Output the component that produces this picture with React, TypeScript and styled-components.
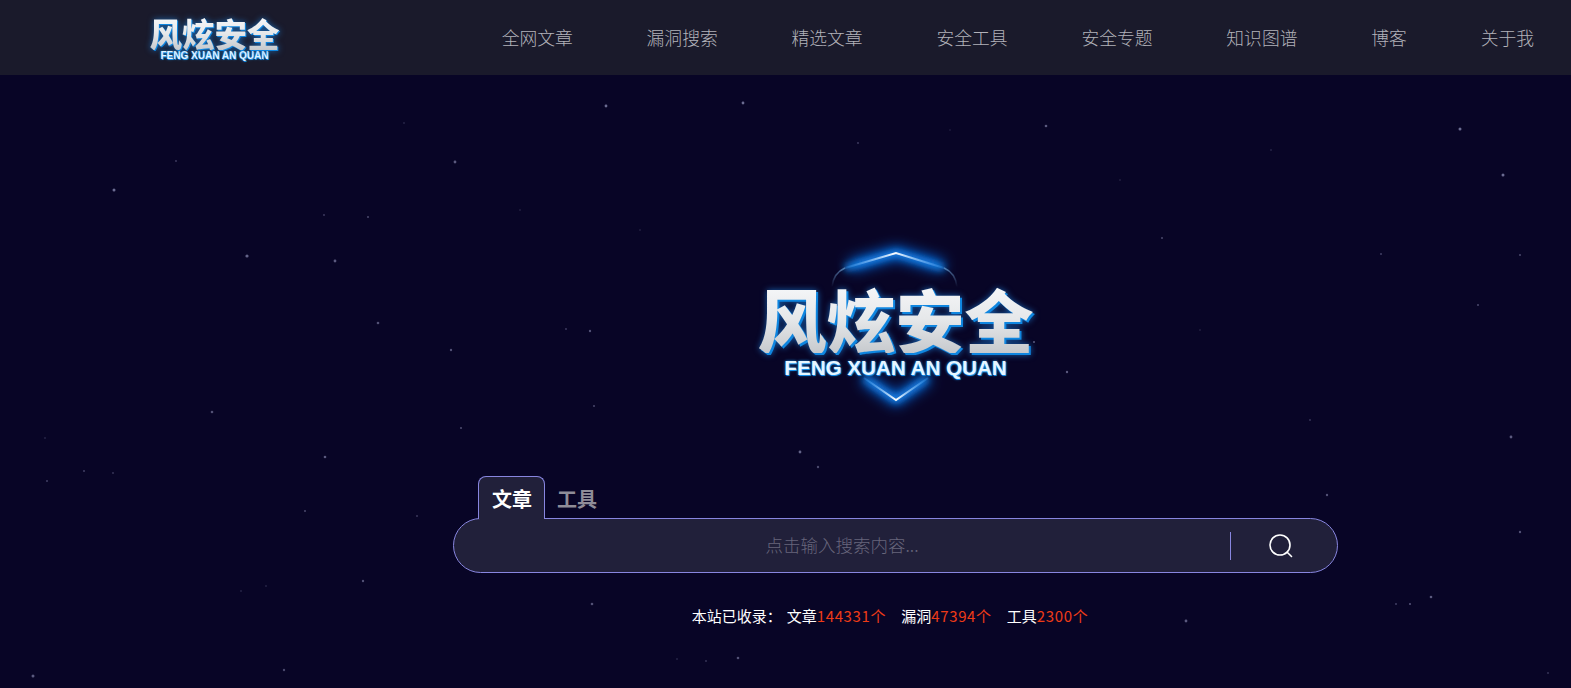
import React from "react";
import styled, { createGlobalStyle } from "styled-components";

const CJK = `"Noto Sans CJK SC", "Noto Sans", "Liberation Sans", sans-serif`;

const Global = createGlobalStyle`
  html, body { margin: 0; padding: 0; height: 100%; background: #080526; }
  * { box-sizing: border-box; }
`;

const Page = styled.div`
  position: relative;
  width: 100%;
  height: 688px;
  overflow: hidden;
  background: #080526;
  font-family: ${CJK};
`;

const Starfield = styled.svg`
  position: absolute;
  inset: 0;
  width: 100%;
  height: 100%;
`;

const Header = styled.header`
  position: relative;
  height: 75px;
  background: #1a1a2b;
  display: flex;
  align-items: center;
  justify-content: space-between;
  padding: 0 37px 0 149px;
`;

const BrandSmall = styled.div`
  width: 131px;
  display: flex;
  flex-direction: column;
  align-items: center;
  margin-top: 3px;
`;

const BrandTitle = styled.div<{ $size: number; $depth: number }>`
  font-family: ${CJK};
  font-weight: 900;
  font-size: ${(p) => p.$size}px;
  line-height: 1;
  white-space: nowrap;
  background: linear-gradient(180deg, #f6f7f9 0%, #e6e8ea 50%, #c6c9cd 100%);
  -webkit-background-clip: text;
  background-clip: text;
  color: transparent;
  filter: drop-shadow(${(p) => p.$depth}px ${(p) => p.$depth}px 0 #0f86e0)
    drop-shadow(0 0 3px rgba(30, 150, 255, 0.6));
`;

const BrandSub = styled.div<{ $size: number; $mt: number }>`
  font-family: "Liberation Sans", Arial, sans-serif;
  font-weight: 700;
  font-size: ${(p) => p.$size}px;
  line-height: 1;
  margin-top: ${(p) => p.$mt}px;
  white-space: nowrap;
  color: #e6f6ff;
  text-shadow: 0 0 3px #1aa0ff, 1px 1px 0 #1488e0;
`;

const Nav = styled.nav`
  display: flex;
  gap: 73.8px;
  margin-top: -2px;
`;

const NavLink = styled.a`
  font-size: 17.8px;
  line-height: 26px;
  font-weight: 300;
  color: #b2b2ba;
  white-space: nowrap;
`;

const Main = styled.main`
  position: relative;
  width: 885px;
  margin-left: 453px;
  padding-top: 170px;
  display: flex;
  flex-direction: column;
`;

const Logo = styled.div`
  position: relative;
  align-self: center;
  width: 300px;
  height: 231px;
  display: flex;
  flex-direction: column;
  align-items: center;
  padding-top: 39px;
`;

const Shield = styled.svg`
  position: absolute;
  left: 0;
  top: 0;
  width: 300px;
  height: 170px;
  overflow: visible;
`;

const LogoText = styled.div`
  position: relative;
  display: flex;
  flex-direction: column;
  align-items: center;
`;

const Tabs = styled.div`
  position: relative;
  z-index: 1;
  display: flex;
  padding-left: 25px;
  margin-bottom: -1px;
`;

const Tab = styled.div<{ $active?: boolean }>`
  height: 43px;
  padding: 5px 12px 0 ${(p) => (p.$active ? 13 : 11)}px;
  font-size: 20px;
  line-height: 34px;
  font-weight: 700;
  color: ${(p) => (p.$active ? "#ffffff" : "#8f8d98")};
  background: ${(p) => (p.$active ? "#21203a" : "transparent")};
  border: 1px solid ${(p) => (p.$active ? "#8886e0" : "transparent")};
  border-bottom: none;
  border-radius: 8px 8px 0 0;
`;

const SearchBar = styled.div`
  height: 55px;
  display: flex;
  align-items: center;
  background: #21203a;
  border: 1px solid #8886e0;
  border-radius: 28px;
`;

const SearchInput = styled.input`
  flex: 1;
  min-width: 0;
  height: 100%;
  padding: 0 0 3px;
  background: transparent;
  border: none;
  outline: none;
  text-align: center;
  font-family: ${CJK};
  font-size: 17.5px;
  font-weight: 300;
  color: #fff;
  &::placeholder {
    color: #68667c;
    opacity: 1;
  }
`;

const Divider = styled.span`
  width: 1px;
  height: 28px;
  background: #8886e0;
`;

const SearchButton = styled.button`
  width: 106px;
  height: 100%;
  padding: 0 7px 0 0;
  background: transparent;
  border: none;
  display: flex;
  align-items: center;
  justify-content: center;
`;

const Stats = styled.div`
  margin-top: 33px;
  display: flex;
  justify-content: center;
  padding-right: 11px;
  font-size: 15px;
  line-height: 20px;
  font-weight: 400;
  color: #ffffff;
`;

const Stat = styled.span<{ $gap: number }>`
  margin-left: ${(p) => p.$gap}px;
`;

const Num = styled.span`
  color: #ee3b17;
  letter-spacing: 0.65px;
`;

const stars: [number, number, number, number][] = [
  [606, 106, 1.4, 0.6], [743, 103, 1.4, 0.6], [1046, 126, 1.3, 0.5], [1460, 129, 1.5, 0.6],
  [1503, 175, 1.5, 0.6], [114, 190, 1.5, 0.6], [455, 162, 1.4, 0.5], [247, 256, 1.6, 0.55],
  [335, 261, 1.4, 0.5], [368, 217, 1, 0.4], [378, 323, 1.3, 0.45], [451, 350, 1.2, 0.45],
  [590, 331, 1.2, 0.45], [1067, 372, 1.2, 0.5], [1381, 254, 1, 0.35], [212, 412, 1.3, 0.45],
  [325, 457, 1.3, 0.5], [305, 511, 1, 0.4], [1511, 437, 1.4, 0.5], [1327, 495, 1.2, 0.45],
  [1520, 532, 1.2, 0.45], [1431, 597, 1.3, 0.5], [1410, 604, 1.1, 0.45], [1186, 621, 1.4, 0.5],
  [592, 604, 1.3, 0.45], [363, 581, 1.2, 0.45], [33, 676, 1.5, 0.5], [284, 670, 1.2, 0.4],
  [738, 658, 1.3, 0.45], [800, 452, 1.4, 0.55], [1162, 238, 1, 0.4], [1478, 305, 1, 0.4],
  [1034, 342, 1, 0.5], [594, 406, 1, 0.4], [818, 467, 1.2, 0.4], [461, 428, 1.1, 0.4],
  [47, 481, 1, 0.35], [84, 471, 1, 0.35], [417, 516, 1, 0.3], [1396, 604, 1, 0.35],
  [1520, 255, 1, 0.4], [1271, 150, 0.8, 0.3], [858, 143, 0.9, 0.35], [404, 123, 0.8, 0.3],
  [176, 161, 0.9, 0.35], [324, 215, 0.9, 0.35], [566, 329, 0.9, 0.35], [45, 438, 0.8, 0.3],
  [113, 473, 0.9, 0.3], [266, 586, 0.8, 0.3], [241, 591, 0.8, 0.3], [706, 661, 0.9, 0.3],
  [677, 659, 0.8, 0.3], [1548, 673, 0.9, 0.3], [1200, 330, 0.8, 0.25], [1310, 420, 0.9, 0.3],
  [640, 230, 0.8, 0.25], [1120, 180, 0.8, 0.25], [950, 130, 0.7, 0.25], [520, 210, 0.8, 0.25],
];

const navItems = ["全网文章", "漏洞搜索", "精选文章", "安全工具", "安全专题", "知识图谱", "博客", "关于我"];

export default function App() {
  return (
    <Page>
      <Global />
      <Starfield aria-hidden="true">
        {stars.map(([x, y, r, o]) => (
          <circle key={`${x}-${y}`} cx={x} cy={y} r={r} fill="#aeb0d8" opacity={o} />
        ))}
      </Starfield>
      <Header>
        <BrandSmall>
          <BrandTitle $size={32.5} $depth={1}>风炫安全</BrandTitle>
          <BrandSub $size={10} $mt={1}>FENG XUAN AN QUAN</BrandSub>
        </BrandSmall>
        <Nav>
          {navItems.map((n) => (
            <NavLink key={n}>{n}</NavLink>
          ))}
        </Nav>
      </Header>
      <Main>
        <Logo>
          <Shield viewBox="0 0 300 170" aria-hidden="true">
            <defs>
              <filter id="glow" x="-40%" y="-100%" width="180%" height="300%">
                <feGaussianBlur stdDeviation="3.5" />
              </filter>
              <filter id="halo" x="-60%" y="-200%" width="220%" height="500%">
                <feGaussianBlur stdDeviation="7" />
              </filter>
              <linearGradient id="side" x1="0" y1="0" x2="0" y2="1">
                <stop offset="0" stopColor="#6f9fd0" stopOpacity="0.7" />
                <stop offset="1" stopColor="#6f9fd0" stopOpacity="0" />
              </linearGradient>
              <linearGradient id="edge" x1="0" y1="0" x2="1" y2="0">
                <stop offset="0" stopColor="#3aa0ff" stopOpacity="0.25" />
                <stop offset="0.5" stopColor="#ffffff" />
                <stop offset="1" stopColor="#3aa0ff" stopOpacity="0.25" />
              </linearGradient>
            </defs>
            <path d="M104 21 L150 8 L197 21" fill="none" stroke="#0a78ff" strokeWidth="10" filter="url(#halo)" />
            <path d="M99 23 L150 8 L198 23" fill="none" stroke="#1a96ff" strokeWidth="5" filter="url(#glow)" />
            <path d="M118 133 L150 155 L182 133" fill="none" stroke="#0a78ff" strokeWidth="9" filter="url(#halo)" />
            <path d="M118 133 L150 155 L182 133" fill="none" stroke="#1a96ff" strokeWidth="5" filter="url(#glow)" />
            <path d="M99 23 C92 26 87 32 86 42" fill="none" stroke="url(#side)" strokeWidth="1.6" />
            <path d="M198 23 C205 26 210 32 211 42" fill="none" stroke="url(#side)" strokeWidth="1.6" />
            <path d="M99 23 L150 8 L198 23" fill="none" stroke="url(#edge)" strokeWidth="2" />
            <path d="M118 133 L150 155 L182 133" fill="none" stroke="url(#edge)" strokeWidth="2" />
          </Shield>
          <LogoText>
            <BrandTitle $size={69} $depth={2}>风炫安全</BrandTitle>
            <BrandSub $size={20.6} $mt={5}>FENG XUAN AN QUAN</BrandSub>
          </LogoText>
        </Logo>
        <Tabs>
          <Tab $active>文章</Tab>
          <Tab>工具</Tab>
        </Tabs>
        <SearchBar>
          <SearchInput placeholder="点击输入搜索内容..." />
          <Divider />
          <SearchButton aria-label="搜索">
            <svg width="26" height="26" viewBox="0 0 26 26" fill="none" stroke="#ffffff" strokeWidth="1.6" strokeLinecap="round">
              <circle cx="12" cy="12" r="10" />
              <path d="M19.2 19.2 L23.5 23.5" />
            </svg>
          </SearchButton>
        </SearchBar>
        <Stats>
          <Stat $gap={0}>本站已收录：</Stat>
          <Stat $gap={5}>文章<Num>144331个</Num></Stat>
          <Stat $gap={15}>漏洞<Num>47394个</Num></Stat>
          <Stat $gap={15}>工具<Num>2300个</Num></Stat>
        </Stats>
      </Main>
    </Page>
  );
}
